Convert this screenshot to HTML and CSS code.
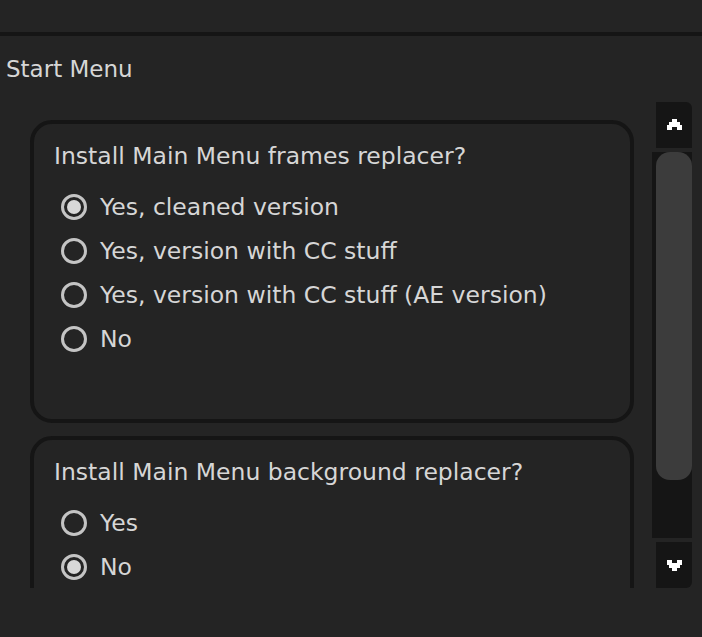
FILE: index.html
```html
<!DOCTYPE html>
<html>
<head>
<meta charset="utf-8">
<link rel="stylesheet" href="styles.css">
</head>
<body>
<div class="topbar"></div>
<div class="divider"></div>
<div class="heading">Start Menu</div>
<div class="main">
  <div class="viewport">
    <div class="card">
      <div class="question">Install Main Menu frames replacer?</div>
      <div class="option"><span class="radio checked"></span><span>Yes, cleaned version</span></div>
      <div class="option"><span class="radio"></span><span>Yes, version with CC stuff</span></div>
      <div class="option"><span class="radio"></span><span>Yes, version with CC stuff (AE version)</span></div>
      <div class="option"><span class="radio"></span><span>No</span></div>
    </div>
    <div class="card">
      <div class="question">Install Main Menu background replacer?</div>
      <div class="option"><span class="radio"></span><span>Yes</span></div>
      <div class="option"><span class="radio checked"></span><span>No</span></div>
    </div>
  </div>
  <div class="scrollbar">
    <div class="sb-btn sb-up">
      <svg width="15" height="12" viewBox="0 0 15 12"><polygon points="5,0 10,0 10,3 13,3 13,6 15,6 15,11 10,11 10,8 5,8 5,11 0,11 0,6 2,6 2,3 5,3" fill="#fff"/></svg>
    </div>
    <div class="sb-track"><div class="sb-thumb"></div></div>
    <div class="sb-btn sb-down">
      <svg width="15" height="12" viewBox="0 0 15 12"><polygon points="0,1 5,1 5,4 10,4 10,1 15,1 15,6 13,6 13,9 10,9 10,12 5,12 5,9 2,9 2,6 0,6" fill="#fff"/></svg>
    </div>
  </div>
</div>
</body>
</html>
```
FILE: styles.css
```css
html, body {
  margin: 0;
  padding: 0;
  background: #242424;
  color: #d6d6d6;
  font-family: "DejaVu Sans", sans-serif;
  font-size: 23.5px;
  overflow: hidden;
}
.topbar {
  height: 32px;
}
.divider {
  height: 4px;
  background: #151515;
}
.heading {
  height: 66px;
  box-sizing: border-box;
  padding: 18px 0 0 6px;
  font-size: 23px;
  line-height: 30px;
}
.main {
  display: flex;
  height: 486px;
}
.viewport {
  width: 652px;
  height: 486px;
  overflow: hidden;
  box-sizing: border-box;
  padding: 18px 0 0 30px;
  display: flex;
  flex-direction: column;
  gap: 13px;
}
.card {
  flex: none;
  width: 604px;
  height: 303px;
  box-sizing: border-box;
  border: 4px solid #151515;
  border-radius: 22px;
  padding: 17px 0 0 20px;
}
.question {
  line-height: 30px;
  margin-bottom: 14px;
}
.option {
  display: flex;
  align-items: center;
  height: 44px;
  padding-left: 7px;
  gap: 13px;
}
.radio {
  position: relative;
  flex: none;
  width: 26px;
  height: 26px;
  box-sizing: border-box;
  border: 3px solid #c4c4c4;
  border-radius: 50%;
}
.radio.checked::after {
  content: "";
  position: absolute;
  left: 3px;
  top: 3px;
  width: 14px;
  height: 14px;
  border-radius: 50%;
  background: #d8d8d8;
}
.scrollbar {
  width: 40px;
  display: flex;
  flex-direction: column;
  gap: 4px;
}
.sb-btn {
  margin-left: 4px;
  height: 46px;
  background: #151515;
  display: flex;
  align-items: center;
  justify-content: center;
}
.sb-up {
  border-top-right-radius: 6px;
}
.sb-down {
  border-bottom-right-radius: 6px;
}
.sb-track {
  height: 386px;
  background: #151515;
}
.sb-thumb {
  margin-left: 4px;
  height: 328px;
  background: #3c3c3c;
  border-radius: 14px;
}
```
